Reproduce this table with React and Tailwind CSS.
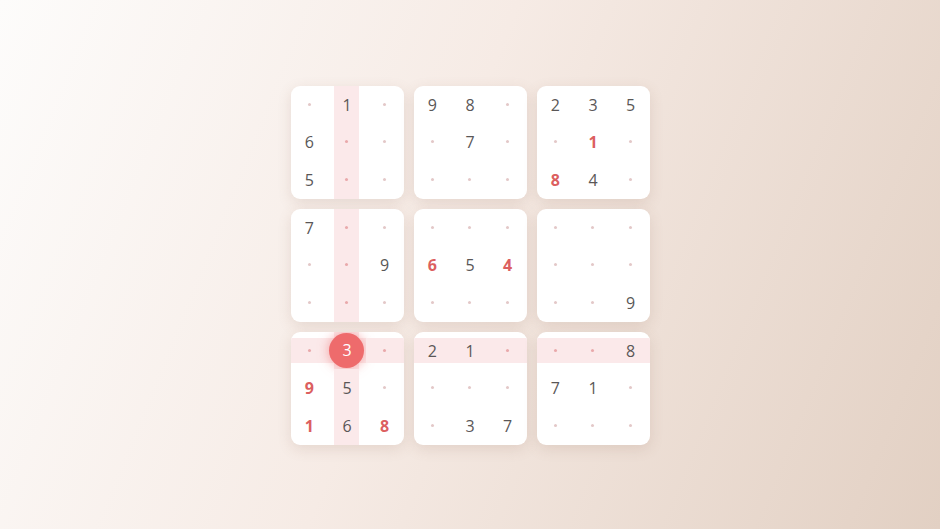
import React from "react";

const boxes = [
  { cells: [".", "1", ".", "6", ".", ".", "5", ".", "."], col: 1 },
  { cells: ["9", "8", ".", ".", "7", ".", ".", ".", "."] },
  { cells: ["2", "3", "5", ".", "*1", ".", "*8", "4", "."] },
  { cells: ["7", ".", ".", ".", ".", "9", ".", ".", "."], col: 1 },
  { cells: [".", ".", ".", "*6", "5", "*4", ".", ".", "."] },
  { cells: [".", ".", ".", ".", ".", ".", ".", ".", "9"] },
  { cells: [".", "@3", ".", "*9", "5", ".", "*1", "6", "*8"], col: 1, row: 0 },
  { cells: ["2", "1", ".", ".", ".", ".", ".", "3", "7"], row: 0 },
  { cells: [".", ".", "8", "7", "1", ".", ".", ".", "."], row: 0 },
];

const Cell = ({ value, rowHi, colHi }) => {
  const hi = rowHi || colHi;
  let content;
  if (value === ".") {
    content = (
      <span
        className={`col-start-1 row-start-1 w-[3px] h-[3px] rounded-full ${
          hi ? "bg-[#e9a9ab]" : "bg-[#e3c8c8]"
        }`}
      />
    );
  } else if (value.startsWith("@")) {
    content = (
      <span className="col-start-1 row-start-1 w-[35px] h-[35px] rounded-full bg-[#ee6b6c] text-white flex items-center justify-center text-[16px] shadow-[0_0_12px_rgba(238,107,108,0.6)]">
        {value.slice(1)}
      </span>
    );
  } else if (value.startsWith("*")) {
    content = (
      <span className="col-start-1 row-start-1 mt-[1px] text-[16px] font-bold text-[#dc5f60]">
        {value.slice(1)}
      </span>
    );
  } else {
    content = (
      <span className="col-start-1 row-start-1 mt-[1px] text-[16px] text-[#5a5757]">
        {value}
      </span>
    );
  }

  return (
    <div className="grid place-items-center">
      {rowHi && <div className="col-start-1 row-start-1 w-full h-[25px] bg-[#fbe9ea]" />}
      {colHi && <div className="col-start-1 row-start-1 h-full w-[25px] bg-[#fbe9ea]" />}
      {content}
    </div>
  );
};

const Box = ({ cells, row, col }) => (
  <div className="w-[113px] h-[113px] bg-white rounded-[9px] overflow-hidden grid grid-cols-3 grid-rows-3 shadow-[0_4px_14px_rgba(140,100,80,0.16)]">
    {cells.map((v, i) => (
      <Cell
        key={i}
        value={v}
        rowHi={row === Math.floor(i / 3)}
        colHi={col === i % 3}
      />
    ))}
  </div>
);

export default function App() {
  return (
    <div
      className="w-full h-screen flex items-center justify-center bg-[linear-gradient(112deg,#fdfcfb_0%,#f6ebe5_45%,#e2d0c3_100%)]"
      style={{ fontFamily: '"Open Sans", "Noto Sans", sans-serif' }}
    >
      <div className="grid grid-cols-3 gap-[10px] mt-[1px]">
        {boxes.map((b, i) => (
          <Box key={i} {...b} />
        ))}
      </div>
    </div>
  );
}
